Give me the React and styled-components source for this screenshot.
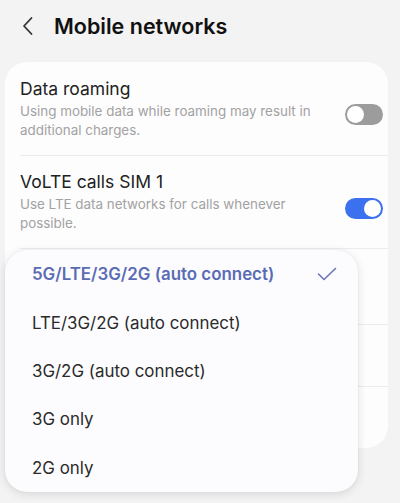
import React from "react";
import styled, { createGlobalStyle } from "styled-components";

const Global = createGlobalStyle`
  html, body { margin: 0; padding: 0; background: #f3f3f3; }
  body { font-family: Inter, "Noto Sans", sans-serif; -webkit-font-smoothing: antialiased; }
`;

const Page = styled.div`
  position: relative;
  width: 400px;
  height: 503px;
  overflow: hidden;
  background: #f3f3f3;
  box-sizing: border-box;
  padding: 0 12px 0 5px;
`;

const Header = styled.div`
  display: flex;
  align-items: center;
  height: 51px;
  padding-left: 16px;
  gap: 19px;
  margin-bottom: 11px;
`;

const Title = styled.h1`
  margin: 0;
  font-size: 21.5px;
  font-weight: 600;
  color: #111;
`;

const Card = styled.div`
  background: #fdfdfd;
  border-radius: 22px;
  padding: 0 0 0 15px;
`;

const Row = styled.div`
  display: flex;
  align-items: center;
  justify-content: space-between;
  min-height: ${p => p.$h}px;
  box-sizing: border-box;
  padding-right: 5px;
  border-top: ${p => (p.$first ? "none" : "1px solid #ececec")};
`;

const Texts = styled.div`
  display: flex;
  flex-direction: column;
  gap: 3px;
  max-width: 310px;
`;

const Label = styled.div`
  font-size: 17.5px;
  color: #222;
`;

const Sub = styled.div`
  font-size: 13.4px;
  line-height: 19px;
  color: #a2a2a2;
`;

const Track = styled.div`
  width: 38px;
  height: 21px;
  border-radius: 11px;
  box-sizing: border-box;
  background: ${p => (p.$on ? "#3b70ef" : "#9c9c9c")};
  display: flex;
  align-items: center;
  justify-content: ${p => (p.$on ? "flex-end" : "flex-start")};
  padding: 2px;
  margin-top: ${p => p.$mt}px;
`;

const Knob = styled.div`
  width: 17px;
  height: 17px;
  border-radius: 50%;
  background: #fff;
`;

const Menu = styled.div`
  position: absolute;
  left: 5px;
  top: 250px;
  width: 353px;
  height: 242px;
  background: #fcfcfe;
  border-radius: 22px;
  box-shadow: 0 2px 10px rgba(0, 0, 0, 0.12), 0 0 2px rgba(0, 0, 0, 0.06);
  box-sizing: border-box;
  padding: 0 21px 0 27px;
  display: flex;
  flex-direction: column;
  justify-content: center;
`;

const Option = styled.div`
  display: flex;
  align-items: center;
  justify-content: space-between;
  height: 49.5px;
  font-size: 16.9px;
  color: ${p => (p.$sel ? "#5b6cb4" : "#2a2a2a")};
  font-weight: ${p => (p.$sel ? 600 : 400)};
`;

const Back = () => (
  <svg width="14" height="20" viewBox="0 0 14 20" fill="none">
    <path d="M10.5 2 L3 10 L10.5 18" stroke="#333" strokeWidth="1.8" strokeLinecap="round" strokeLinejoin="round" />
  </svg>
);

const Check = () => (
  <svg width="20" height="14" viewBox="0 0 20 14" fill="none">
    <path d="M1.5 7 L7 12.5 L18.5 1.5" stroke="#6a76b8" strokeWidth="1.6" strokeLinecap="round" strokeLinejoin="round" />
  </svg>
);

const options = [
  "5G/LTE/3G/2G (auto connect)",
  "LTE/3G/2G (auto connect)",
  "3G/2G (auto connect)",
  "3G only",
  "2G only",
];

export default function App() {
  return (
    <Page>
      <Global />
      <Header>
        <Back />
        <Title>Mobile networks</Title>
      </Header>
      <Card>
        <Row $first $h={93}>
          <Texts>
            <Label>Data roaming</Label>
            <Sub>Using mobile data while roaming may result in additional charges.</Sub>
          </Texts>
          <Track $mt={12}><Knob /></Track>
        </Row>
        <Row $h={93}>
          <Texts>
            <Label>VoLTE calls SIM 1</Label>
            <Sub>Use LTE data networks for calls whenever possible.</Sub>
          </Texts>
          <Track $on $mt={12}><Knob /></Track>
        </Row>
        <Row $h={76} />
        <Row $h={62} />
        <Row $h={62} />
      </Card>
      <Menu>
        {options.map((o, i) => (
          <Option key={o} $sel={i === 0}>
            <span>{o}</span>
            {i === 0 && <Check />}
          </Option>
        ))}
      </Menu>
    </Page>
  );
}
